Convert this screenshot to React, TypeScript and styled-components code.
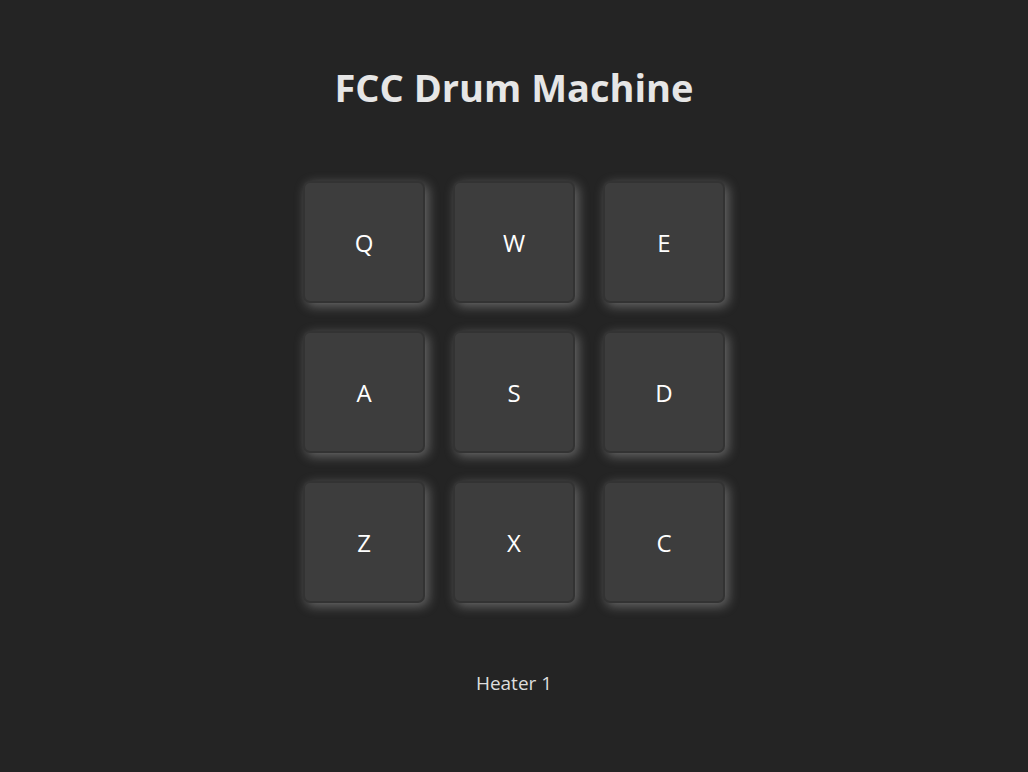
import React from "react";
import styled, { createGlobalStyle } from "styled-components";

const Global = createGlobalStyle`
  html, body { margin: 0; padding: 0; background: #242424; }
  body { font-family: "Open Sans", "Noto Sans", sans-serif; color: #e6e6e6; }
`;

const Page = styled.main`
  min-height: 772px;
  display: flex;
  flex-direction: column;
  align-items: center;
`;

const Title = styled.h1`
  margin: 61px 0 0;
  font-size: 38px;
  font-weight: 700;
  line-height: 52px;
  color: #e6e6e6;
`;

const Grid = styled.div`
  margin-top: 68px;
  display: grid;
  grid-template-columns: repeat(3, 122px);
  grid-auto-rows: 122px;
  gap: 28px;
`;

const Pad = styled.button`
  box-sizing: border-box;
  width: 122px;
  height: 122px;
  background: #3d3d3d;
  border: 2px solid #333333;
  border-radius: 7px;
  box-shadow: 3px 3px 12px rgba(220, 220, 220, 0.38);
  color: #ffffff;
  font-family: "Open Sans", "Noto Sans", sans-serif;
  font-size: 24px;
  display: flex;
  align-items: center;
  justify-content: center;
  padding: 0;
  cursor: pointer;
`;

const Display = styled.p`
  margin: 68px 0 0;
  font-size: 19px;
  line-height: 24px;
  color: #dddddd;
`;

const keys = ["Q", "W", "E", "A", "S", "D", "Z", "X", "C"];

export default function App() {
  return (
    <>
      <Global />
      <Page>
        <Title>FCC Drum Machine</Title>
        <Grid>
          {keys.map((k) => (
            <Pad key={k}>{k}</Pad>
          ))}
        </Grid>
        <Display>Heater 1</Display>
      </Page>
    </>
  );
}
